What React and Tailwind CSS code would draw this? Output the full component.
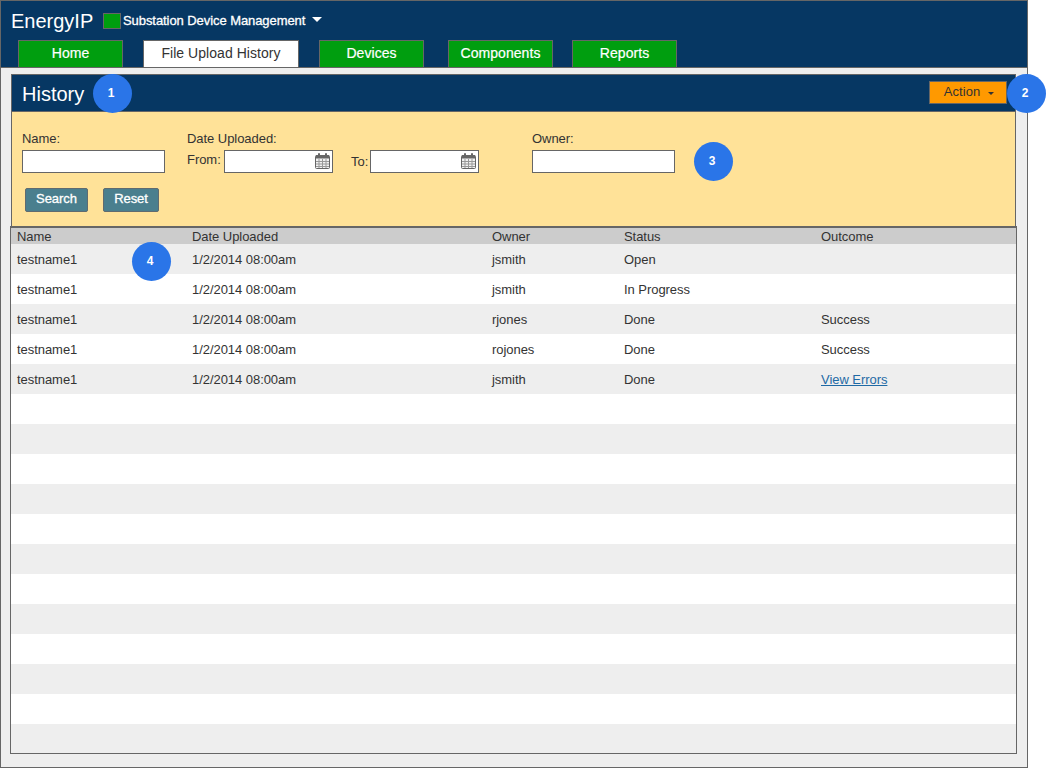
import React from "react";

const files = [
	["testname1", "1/2/2014 08:00am", "jsmith", "Open", ""],
	["testname1", "1/2/2014 08:00am", "jsmith", "In Progress", ""],
	["testname1", "1/2/2014 08:00am", "rjones", "Done", "Success"],
	["testname1", "1/2/2014 08:00am", "rojones", "Done", "Success"],
	["testname1", "1/2/2014 08:00am", "jsmith", "Done", "View Errors"],
];

const rows = Array.from({ length: 17 }, (_, i) => files[i] || ["", "", "", "", ""]);

function Badge({ n, className }) {
	return (
		<div className={"absolute w-[39px] h-[39px] rounded-full bg-[#2a75e8] text-white text-xs font-bold pr-[3px] pb-[2px] flex items-center justify-center " + className}>
			{n}
		</div>
	);
}

function Tab({ label, active, className }) {
	return (
		<div
			className={
				"h-[27px] border border-b-0 border-[#666] flex items-center justify-center pb-[2px] text-sm tracking-[0.05px] " +
				(active ? "w-[156px] bg-white text-[#333] " : "w-[105px] bg-[#009e0f] text-white [-webkit-text-stroke:0.2px_white] ") +
				(className || "")
			}
		>
			{label}
		</div>
	);
}

function CalendarIcon() {
	return (
		<svg width="15" height="16" viewBox="0 0 15 16" className="absolute right-[2px] top-[2px]">
			<rect x="0.5" y="2.5" width="14" height="13" rx="1" fill="#f2f2f2" stroke="#666" />
			<rect x="1" y="2" width="13" height="3.5" fill="#666" />
			<rect x="3" y="0" width="2" height="4" rx="1" fill="#666" />
			<rect x="10" y="0" width="2" height="4" rx="1" fill="#666" />
			<path d="M1 8.5h13M1 11h13M1 13.5h13M4 6v9M7.5 6v9M11 6v9" stroke="#999" strokeWidth="1" fill="none" />
		</svg>
	);
}

function DateInput({ className }) {
	return (
		<div className={"relative w-[109px] h-[23px] bg-white border border-[#666] " + (className || "")}>
			<CalendarIcon />
		</div>
	);
}

function FilterButton({ label, className }) {
	return (
		<button className={"h-6 bg-[#4a7f8e] border border-[#5f6b70] rounded-[2px] text-white text-[13px] [-webkit-text-stroke:0.3px_white] pb-[3px] " + className}>
			{label}
		</button>
	);
}

export default function App() {
	return (
		<div className="relative w-[1046px] h-[768px] bg-white font-['Liberation_Sans',Arial,sans-serif] overflow-hidden">
			<div className="w-[1028px] h-[768px] border border-[#666] bg-[#eeeeee] flex flex-col">
				<div className="h-[67px] bg-[#063763] border-b border-[#666] flex flex-col pl-[17px] shrink-0">
					<div className="flex items-center h-[39px] -ml-[7px] shrink-0">
						<span className="text-white text-xl w-[92px]">EnergyIP</span>
						<span className="w-[18px] h-[16px] bg-[#009e0f] border border-[#666]" />
						<span className="ml-[2px] text-white text-[13px] tracking-[-0.07px] [-webkit-text-stroke:0.3px_white]">Substation Device Management</span>
						<span className="ml-[7px] mb-[3px] w-0 h-0 border-x-[5px] border-x-transparent border-t-[5px] border-t-white" />
					</div>
					<div className="flex">
						<Tab label="Home" />
						<Tab label="File Upload History" active className="ml-5" />
						<Tab label="Devices" className="ml-5" />
						<Tab label="Components" className="ml-6" />
						<Tab label="Reports" className="ml-[19px]" />
					</div>
				</div>

				<div className="mt-[6px] ml-[10px] w-[1005px] flex flex-col border-t border-[#666]">
					<div className="h-[37px] bg-[#063763] border-x border-b border-[#666] flex items-center justify-between pl-[10px] pr-[8px]">
						<span className="text-white text-xl mt-[1px]">History</span>
						<button className="w-[78px] h-[23px] bg-[#ff9900] border border-[#666] text-[#333] text-[13px] tracking-[0.1px] flex items-center justify-center gap-[8px] mb-[1px] pb-[2px] pl-[2px]">
							Action
							<span className="mt-[3px] w-0 h-0 border-x-[3px] border-x-transparent border-t-[3px] border-t-[#333]" />
						</button>
					</div>

					<div className="h-[114px] bg-[#ffe298] border-x border-[#666] pl-[10px] pt-[17px] text-[13px] tracking-[-0.05px] text-[#333] flex flex-col">
						<div className="flex">
							<div className="w-[165px] flex flex-col">
								<span className="h-[21px]">Name:</span>
								<div className="w-[143px] h-[23px] bg-white border border-[#666]" />
							</div>
							<div className="w-[345px] flex flex-col">
								<span className="h-[21px]">Date Uploaded:</span>
								<div className="flex items-center">
									<span className="w-[37px] mb-[3px]">From:</span>
									<DateInput />
									<span className="ml-[18px] w-[19px]">To:</span>
									<DateInput />
								</div>
							</div>
							<div className="flex flex-col">
								<span className="h-[21px]">Owner:</span>
								<div className="w-[143px] h-[23px] bg-white border border-[#666]" />
							</div>
						</div>
						<div className="flex mt-[15px] ml-[3px] gap-[15px]">
							<FilterButton label="Search" className="w-[63px]" />
							<FilterButton label="Reset" className="w-14" />
						</div>
					</div>

					<div className="-ml-px w-[1007px] border border-[#666] border-t-2 flex flex-col text-[13px] tracking-[-0.05px] text-[#333] h-[528px] overflow-hidden">
						<div className="h-[16px] bg-[#cccccc] flex items-center pl-[6px] pt-[2px] shrink-0">
							<span className="w-[175px]">Name</span>
							<span className="w-[300px]">Date Uploaded</span>
							<span className="w-[132px]">Owner</span>
							<span className="w-[197px]">Status</span>
							<span>Outcome</span>
						</div>
						{rows.map((r, i) => (
							<div key={i} className={"h-[30px] flex items-center pl-[6px] pt-[1px] shrink-0 " + (i % 2 === 0 ? "bg-[#eeeeee]" : "bg-white")}>
								<span className="w-[175px]">{r[0]}</span>
								<span className="w-[300px]">{r[1]}</span>
								<span className="w-[132px]">{r[2]}</span>
								<span className="w-[197px]">{r[3]}</span>
								{r[4] === "View Errors" ? (
									<a href="#" className="text-[#1f6aa5] underline">{r[4]}</a>
								) : (
									<span>{r[4]}</span>
								)}
							</div>
						))}
					</div>
				</div>
			</div>

			<Badge n="1" className="left-[93px] top-[74px]" />
			<Badge n="2" className="left-[1007px] top-[74px]" />
			<Badge n="3" className="left-[694px] top-[142px]" />
			<Badge n="4" className="left-[132px] top-[242px]" />
		</div>
	);
}
